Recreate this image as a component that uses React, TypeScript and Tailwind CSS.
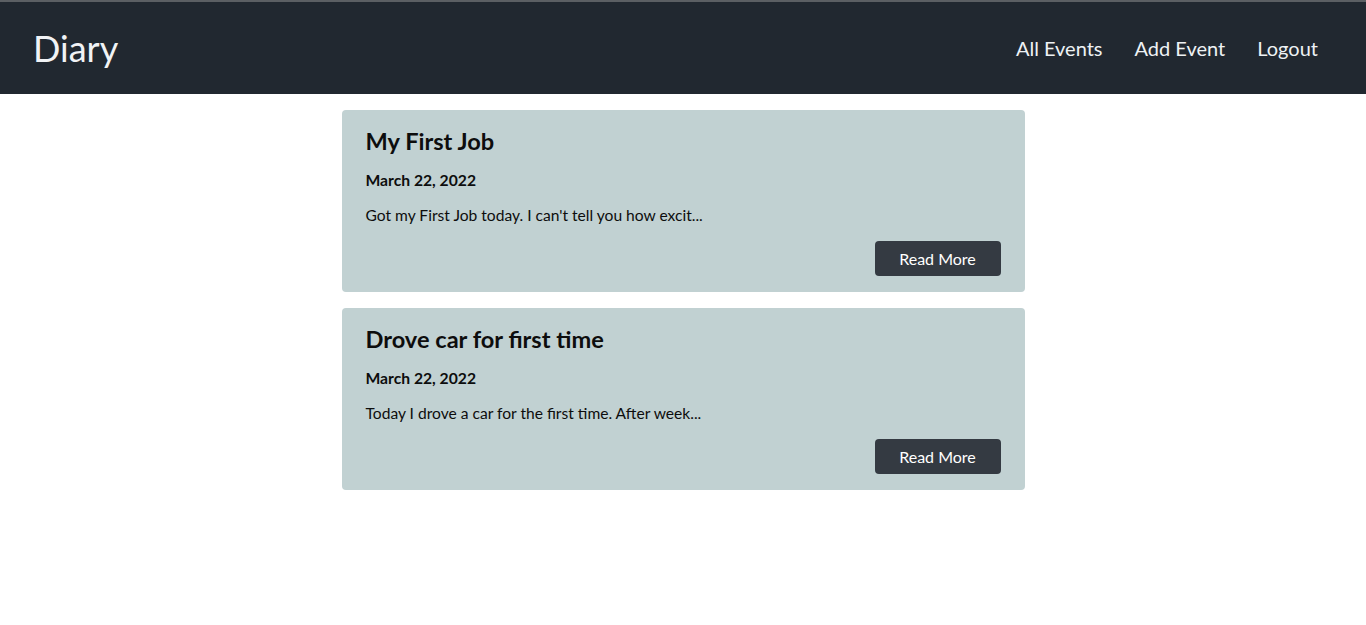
const events = [
  {
    title: "My First Job",
    date: "March 22, 2022",
    body: "Got my First Job today. I can't tell you how excit...",
  },
  {
    title: "Drove car for first time",
    date: "March 22, 2022",
    body: "Today I drove a car for the first time. After week...",
  },
];

const App = () => {
  return (
    <div className="min-h-screen bg-white font-['Lato',sans-serif]">
      <nav className="flex h-[94px] items-center justify-between border-t-2 border-[#5b5f63] bg-[#212830] pl-[33px] pr-[48px]">
        <a className="text-[36px] leading-none text-[#f1f3f5]">Diary</a>
        <div className="flex items-center gap-[32px] text-[20px] text-[#eef2f4]">
          <a>All Events</a>
          <a>Add Event</a>
          <a>Logout</a>
        </div>
      </nav>
      <main className="mx-auto flex w-[683px] flex-col gap-[16px] pt-[16px]">
        {events.map((e) => (
          <div
            key={e.title}
            className="flex h-[182px] flex-col rounded-[4px] bg-[#c1d1d2] px-[24px] pt-[17px] text-[#0d0d0d]"
          >
            <h2 className="text-[23.6px] font-bold leading-[1.2]">{e.title}</h2>
            <p className="mt-[14px] text-[15.7px] font-bold leading-[1.5]">{e.date}</p>
            <p className="mt-[11px] text-[15.6px] leading-[1.5]">{e.body}</p>
            <div className="mt-[14px] flex justify-end">
              <button className="h-[35px] w-[126px] rounded-[4px] bg-[#343a42] text-[16px] text-white">
                Read More
              </button>
            </div>
          </div>
        ))}
      </main>
    </div>
  );
};

export default App;
